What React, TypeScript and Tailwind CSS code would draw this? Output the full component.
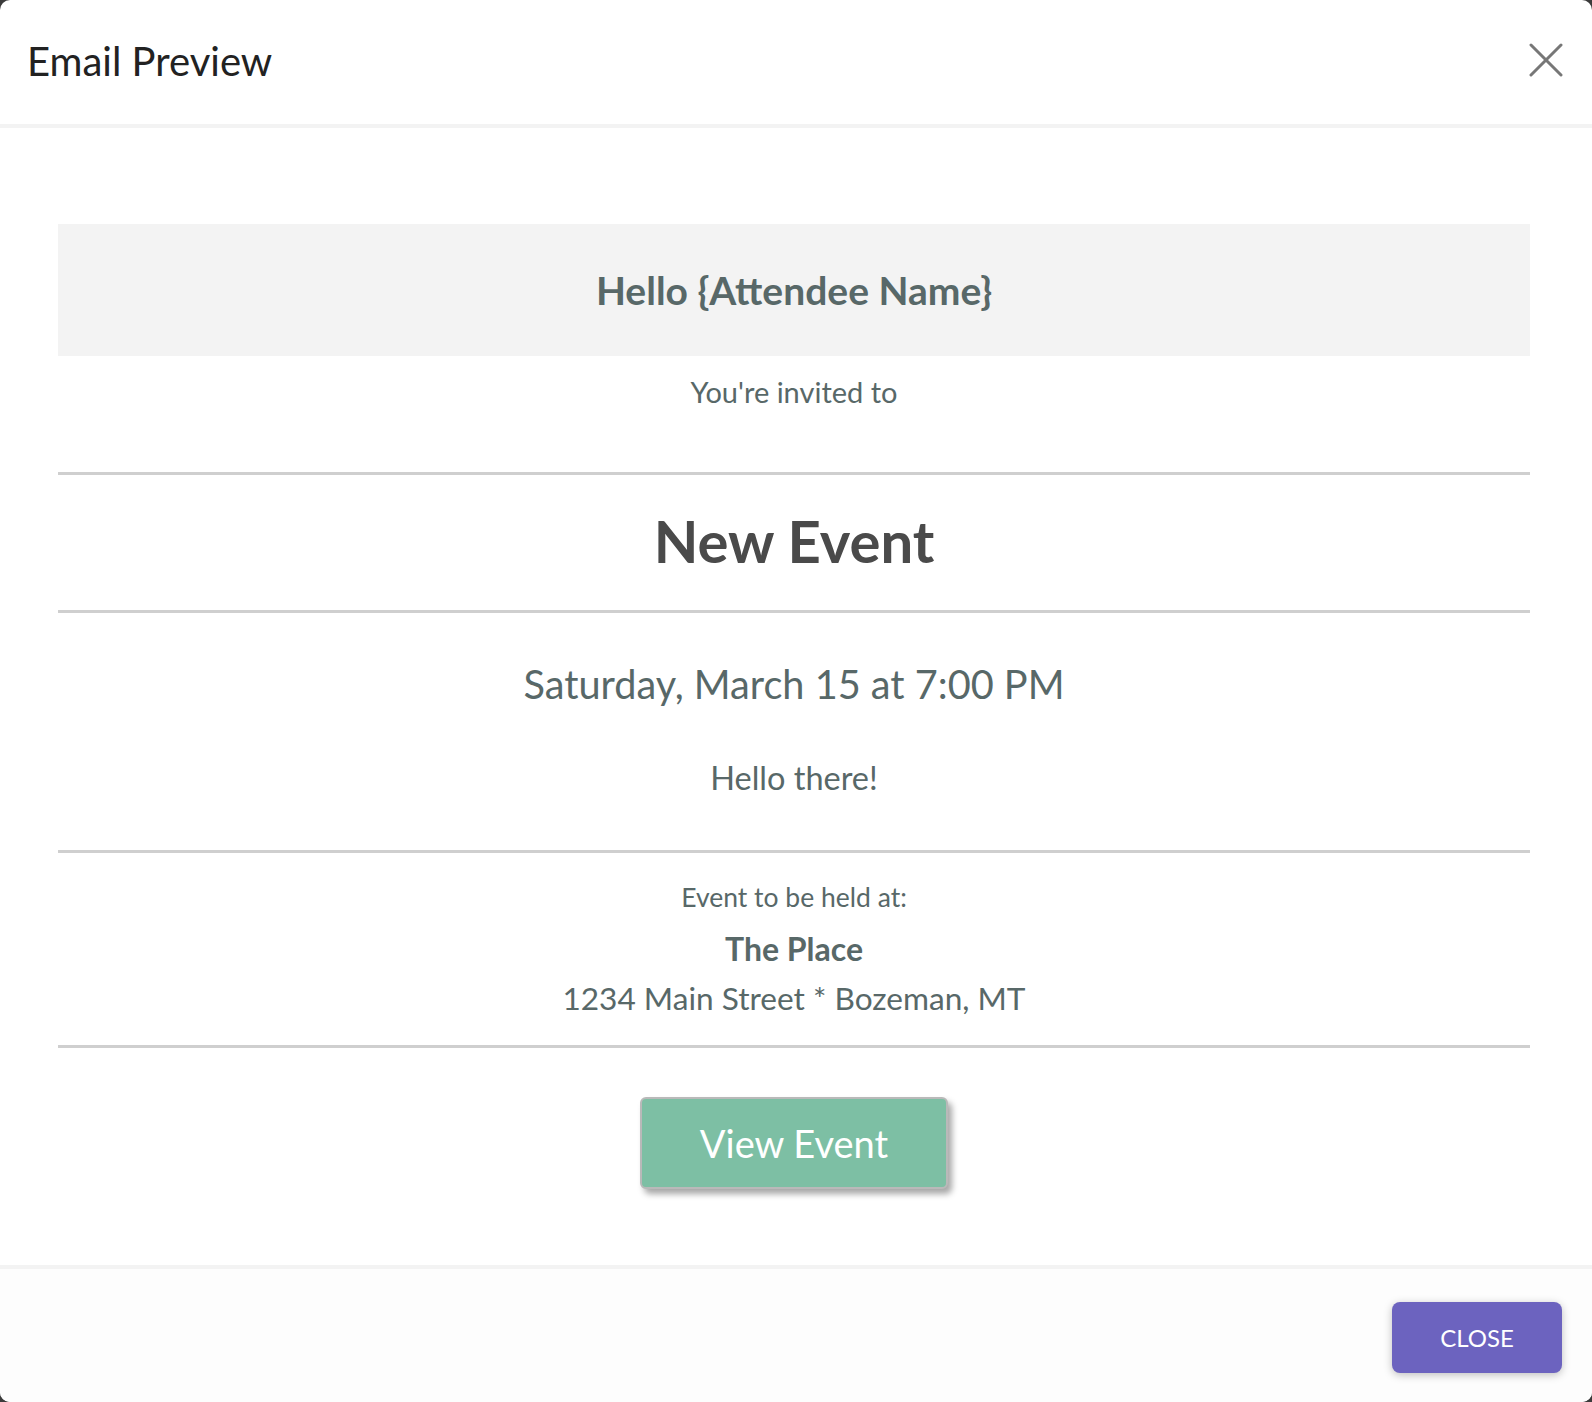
const lato = "font-['Lato','Liberation_Sans',sans-serif]";

function Divider() {
  return <div className="h-[3px] bg-[#cfcfcf]" />;
}

function CloseIcon() {
  return (
    <svg width="34" height="34" viewBox="0 0 34 34" fill="none" stroke="currentColor" strokeWidth="3" strokeLinecap="round">
      <path d="M2 2 32 32" />
      <path d="M32 2 2 32" />
    </svg>
  );
}

function EmailBody() {
  return (
    <div className="flex flex-col text-center text-[#586868]">
      {/* Greeting */}
      <div className="flex h-[132px] items-center justify-center bg-[#f3f3f3]">
        <h2 className="text-[39px] font-bold leading-none">Hello {'{Attendee Name}'}</h2>
      </div>

      <div className="h-[116px] pt-[19px]">
        <p className="text-[29px] leading-[34px]">You're invited to</p>
      </div>

      <Divider />

      <div className="flex h-[135px] items-center justify-center pb-[3px]">
        <h1 className="text-[58px] font-bold leading-none text-[#4a4a4a]">New Event</h1>
      </div>

      <Divider />

      {/* Date and message */}
      <div className="flex h-[237px] flex-col items-center pt-[47px]">
        <p className="text-[39.7px] leading-[48px]">Saturday, March 15 at 7:00 PM</p>
        <p className="mt-[51px] text-[32.5px] leading-[38px]">Hello there!</p>
      </div>

      <Divider />

      {/* Location */}
      <div className="flex h-[192px] flex-col items-center pt-[28px]">
        <p className="text-[26.5px] leading-[32px]">Event to be held at:</p>
        <p className="mt-[17px] text-[32px] font-bold leading-[38px]">The Place</p>
        <p className="mt-[11px] text-[31.6px] leading-[38px]">1234 Main Street * Bozeman, MT</p>
      </div>

      <Divider />

      <div className="flex justify-center pt-[49px]">
        <button className="flex h-[92px] w-[308px] items-center justify-center rounded-[6px] border-2 border-[#b9b9b9] bg-[#7dbfa4] text-[38px] text-white shadow-[4px_5px_6px_rgba(0,0,0,0.35)]">
          View Event
        </button>
      </div>
    </div>
  );
}

export default function App() {
  return (
    <div className={`h-[1402px] w-full bg-[#3b3b3b] ${lato}`}>
      <div className="flex h-full flex-col overflow-hidden rounded-[10px] bg-white">
        {/* Header */}
        <div className="flex h-[128px] shrink-0 items-center justify-between border-b-4 border-[#f3f3f3] pb-[4px] pl-[27px] pr-[29px]">
          <h3 className="pt-[2px] text-[40px] leading-none text-[#222222]">Email Preview</h3>
          <button className="text-[#777777]">
            <CloseIcon />
          </button>
        </div>

        {/* Body */}
        <div className="flex-1 pl-[58px] pr-[62px] pt-[96px]">
          <EmailBody />
        </div>

        {/* Footer */}
        <div className="flex h-[137px] shrink-0 items-start justify-end border-t-4 border-[#f3f3f3] bg-[#fdfdfd] pr-[30px] pt-[33px]">
          <button className="h-[71px] w-[170px] rounded-[8px] bg-[#6c63bf] text-[24px] text-white shadow-[0_2px_8px_rgba(0,0,0,0.25)]">
            CLOSE
          </button>
        </div>
      </div>
    </div>
  );
}
